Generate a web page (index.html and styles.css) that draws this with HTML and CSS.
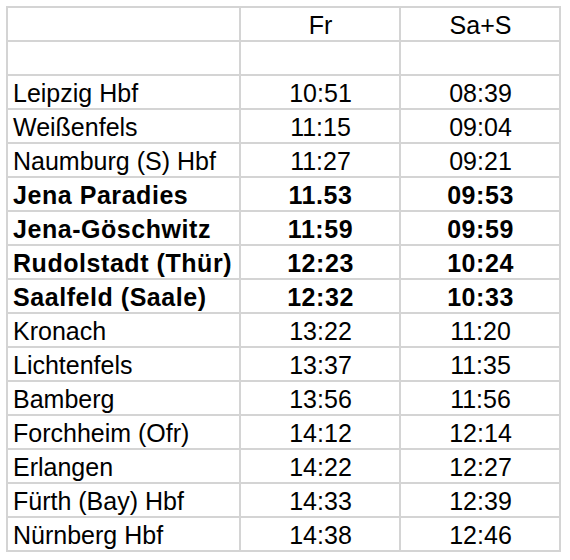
FILE: index.html
```html
<!DOCTYPE html>
<html lang="de">
<head>
<meta charset="utf-8">
<title>Fahrplan</title>
<link rel="stylesheet" href="styles.css">
</head>
<body>
<div class="timetable">
  <div class="cell"></div><div class="cell num">Fr</div><div class="cell num">Sa+S</div>
  <div class="cell"></div><div class="cell num"></div><div class="cell num"></div>
  <div class="cell">Leipzig Hbf</div><div class="cell num">10:51</div><div class="cell num">08:39</div>
  <div class="cell">Weißenfels</div><div class="cell num">11:15</div><div class="cell num">09:04</div>
  <div class="cell">Naumburg (S) Hbf</div><div class="cell num">11:27</div><div class="cell num">09:21</div>
  <div class="cell bold">Jena Paradies</div><div class="cell num bold">11.53</div><div class="cell num bold">09:53</div>
  <div class="cell bold">Jena-Göschwitz</div><div class="cell num bold">11:59</div><div class="cell num bold">09:59</div>
  <div class="cell bold">Rudolstadt (Thür)</div><div class="cell num bold">12:23</div><div class="cell num bold">10:24</div>
  <div class="cell bold">Saalfeld (Saale)</div><div class="cell num bold">12:32</div><div class="cell num bold">10:33</div>
  <div class="cell">Kronach</div><div class="cell num">13:22</div><div class="cell num">11:20</div>
  <div class="cell">Lichtenfels</div><div class="cell num">13:37</div><div class="cell num">11:35</div>
  <div class="cell">Bamberg</div><div class="cell num">13:56</div><div class="cell num">11:56</div>
  <div class="cell">Forchheim (Ofr)</div><div class="cell num">14:12</div><div class="cell num">12:14</div>
  <div class="cell">Erlangen</div><div class="cell num">14:22</div><div class="cell num">12:27</div>
  <div class="cell">Fürth (Bay) Hbf</div><div class="cell num">14:33</div><div class="cell num">12:39</div>
  <div class="cell">Nürnberg Hbf</div><div class="cell num">14:38</div><div class="cell num">12:46</div>
</div>
</body>
</html>
```
FILE: styles.css
```css
html, body {
  background: #ffffff;
}
body {
  margin: 6px 0 0 6px;
  font-family: "Liberation Sans", Arial, sans-serif;
  color: #000000;
}
.timetable {
  display: grid;
  grid-template-columns: 231px 158px 158px;
  grid-auto-rows: 32px;
  gap: 2px;
  padding: 2px;
  background: #d4d4d4;
  width: max-content;
}
.cell {
  background: #ffffff;
  display: flex;
  align-items: flex-end;
  padding: 0 4px 1px 5px;
  font-size: 25px;
  line-height: 28px;
  white-space: nowrap;
  overflow: hidden;
}
.num {
  justify-content: center;
}
.bold {
  font-weight: bold;
  letter-spacing: 0.55px;
}
```
